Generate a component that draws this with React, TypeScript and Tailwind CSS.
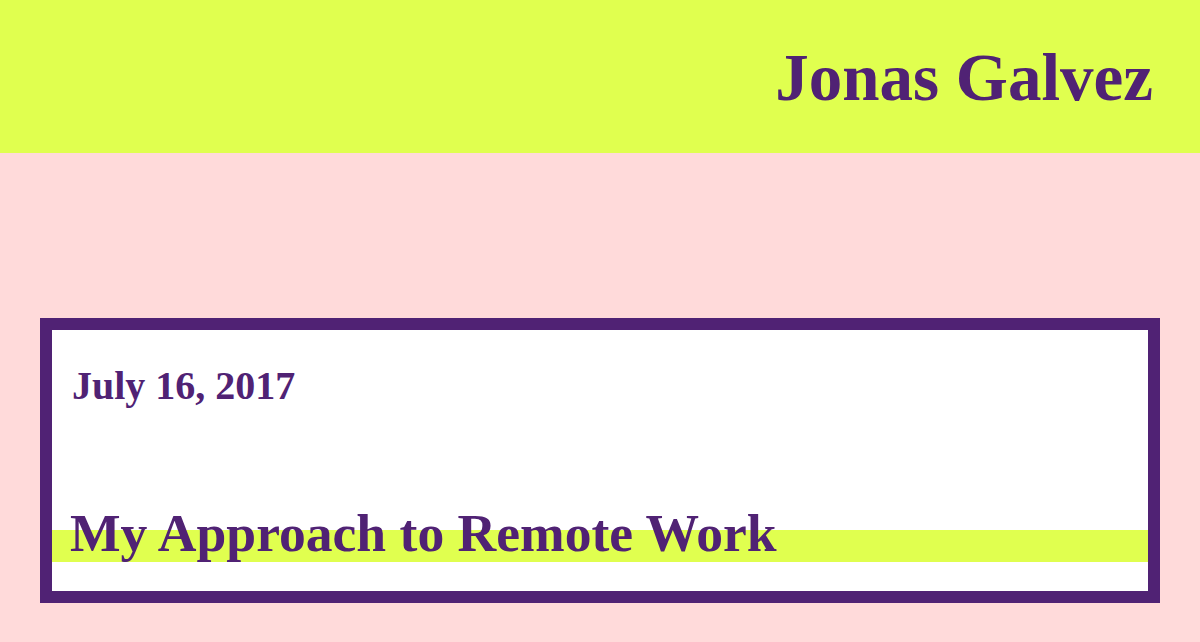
import React from "react";

const serif = { fontFamily: '"Liberation Serif", "Times New Roman", serif' };

const App = () => {
  return (
    <div className="min-h-[642px] w-full bg-[#ffdada] text-[#502274]" style={serif}>
      <header className="h-[153px] bg-[#e0ff4f] flex justify-end pt-[44px] pr-[47px]">
        <h1 className="text-[67px] leading-[67px] font-bold">Jonas Galvez</h1>
      </header>

      <main className="px-[40px] pt-[165px]">
        <article className="border-[12px] border-[#502274] bg-white pt-[36px] pb-[31px]">
          <p className="pl-[20px] text-[40px] leading-[40px] font-bold">July 16, 2017</p>
          <div className="relative mt-[101px]">
            <div className="absolute left-0 right-0 top-[23px] h-[32px] bg-[#e0ff4f]" />
            <h2 className="relative pl-[18px] text-[53.6px] leading-[53px] font-bold">
              My Approach to Remote Work
            </h2>
          </div>
        </article>
      </main>
    </div>
  );
};

export default App;
